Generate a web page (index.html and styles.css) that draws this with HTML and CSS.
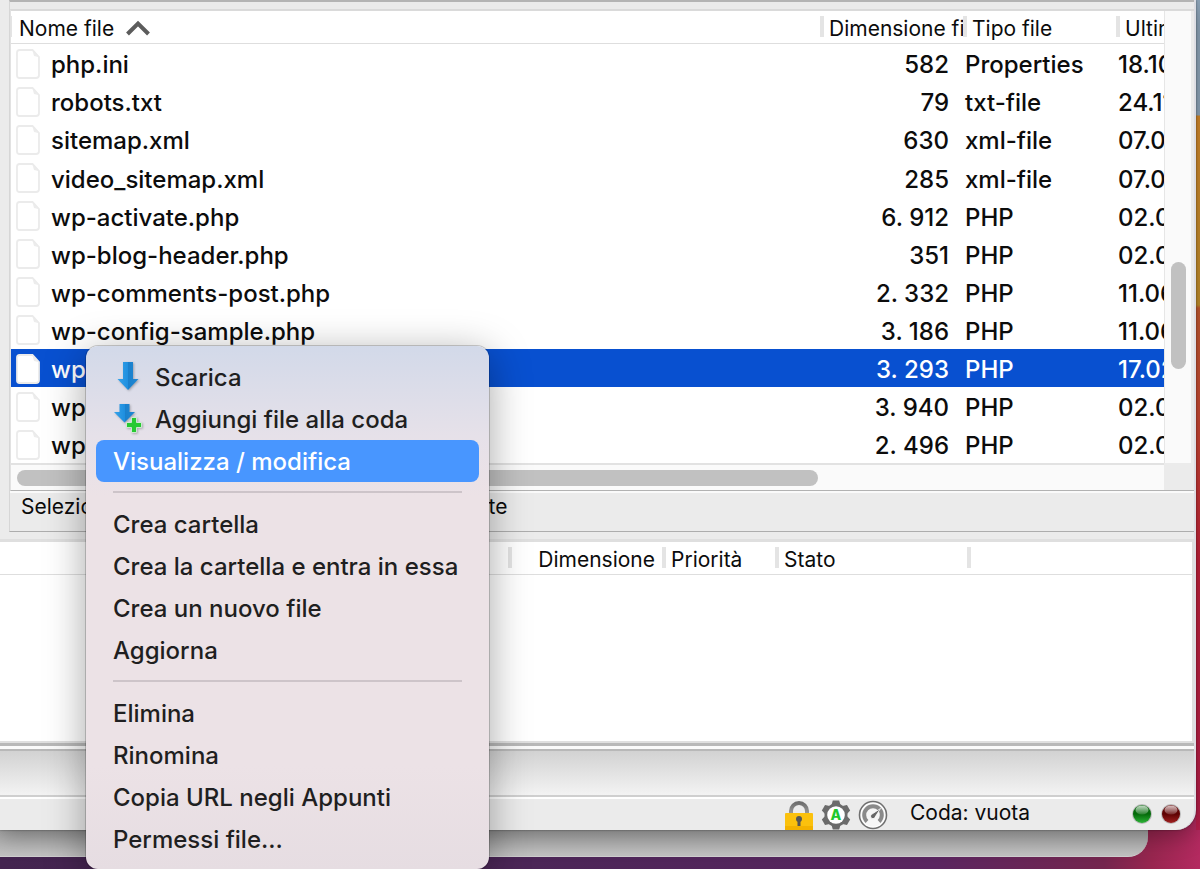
FILE: index.html
```html
<!DOCTYPE html>
<html lang="it">
<head>
<meta charset="utf-8">
<meta name="viewport" content="width=device-width, initial-scale=1">
<title>Gestione file</title>
<link rel="stylesheet" href="styles.css">
</head>
<body>
<svg class="defs" aria-hidden="true">
  <defs>
    <linearGradient id="blue" x1="0" x2="1" y1="0" y2="0">
      <stop offset="0" stop-color="#36a3ea"/><stop offset=".5" stop-color="#1f8fdf"/><stop offset=".51" stop-color="#1a80cc"/><stop offset="1" stop-color="#2088d4"/>
    </linearGradient>
    <linearGradient id="metal" x1="0" x2="0" y1="0" y2="1">
      <stop offset="0" stop-color="#6e6e6e"/><stop offset="1" stop-color="#9c9c9c"/>
    </linearGradient>
    <linearGradient id="led-green" x1="0" x2="0" y1="0" y2="1">
      <stop offset="0" stop-color="#0b6b10"/><stop offset=".5" stop-color="#046a0a"/><stop offset="1" stop-color="#2cb336"/>
    </linearGradient>
    <linearGradient id="led-red" x1="0" x2="0" y1="0" y2="1">
      <stop offset="0" stop-color="#6a0b0b"/><stop offset=".5" stop-color="#5e0202"/><stop offset="1" stop-color="#a02020"/>
    </linearGradient>
    <linearGradient id="shine" x1="0" x2="0" y1="0" y2="1">
      <stop offset="0" stop-color="#fff" stop-opacity=".75"/><stop offset="1" stop-color="#fff" stop-opacity=".15"/>
    </linearGradient>
    <symbol id="file" viewBox="0 0 24 30">
      <path d="M3.500 1H16.500L23 8V26Q23 29 20 29H3.500Q1 29 1 26.500V3.500Q1 1 3.500 1Z" fill="#fff" stroke="#ebebeb" stroke-width="1.800"/>
      <path d="M16.500 1.500 18 7 22.500 8Z" fill="#ececec"/>
    </symbol>
  </defs>
</svg>
<main class="window">
  <div class="remote">
    <section class="panel">
      <div class="list">
        <table class="files">
          <colgroup><col><col class="c-size"><col class="c-type"><col class="c-date"></colgroup>
          <thead>
            <tr>
              <th>Nome file <svg class="sort" viewBox="0 0 24 16"><path d="M1.500 14 12 3.500 22.500 14" fill="none" stroke="#5c5c5c" stroke-width="4"/></svg></th>
              <th>Dimensione file</th><th>Tipo file</th><th>Ultima modifica</th>
            </tr>
          </thead>
          <tbody>
            <tr><td><svg class="file"><use href="#file"/></svg>php.ini</td><td>582</td><td>Properties</td><td>18.10.2020</td></tr>
            <tr><td><svg class="file"><use href="#file"/></svg>robots.txt</td><td>79</td><td>txt-file</td><td>24.11.2020</td></tr>
            <tr><td><svg class="file"><use href="#file"/></svg>sitemap.xml</td><td>630</td><td>xml-file</td><td>07.07.2020</td></tr>
            <tr><td><svg class="file"><use href="#file"/></svg>video_sitemap.xml</td><td>285</td><td>xml-file</td><td>07.07.2020</td></tr>
            <tr><td><svg class="file"><use href="#file"/></svg>wp-activate.php</td><td>6. 912</td><td>PHP</td><td>02.09.2020</td></tr>
            <tr><td><svg class="file"><use href="#file"/></svg>wp-blog-header.php</td><td>351</td><td>PHP</td><td>02.09.2020</td></tr>
            <tr><td><svg class="file"><use href="#file"/></svg>wp-comments-post.php</td><td>2. 332</td><td>PHP</td><td>11.06.2020</td></tr>
            <tr><td><svg class="file"><use href="#file"/></svg>wp-config-sample.php</td><td>3. 186</td><td>PHP</td><td>11.06.2020</td></tr>
            <tr class="selected"><td><svg class="file"><use href="#file"/></svg>wp-config.php</td><td>3. 293</td><td>PHP</td><td>17.02.2020</td></tr>
            <tr><td><svg class="file"><use href="#file"/></svg>wp-cron.php</td><td>3. 940</td><td>PHP</td><td>02.09.2020</td></tr>
            <tr><td><svg class="file"><use href="#file"/></svg>wp-links-opml.php</td><td>2. 496</td><td>PHP</td><td>02.09.2020</td></tr>
          </tbody>
        </table>
      </div>
      <div class="track-v"><div class="thumb-v"></div></div>
      <div class="track-h"><div class="thumb-h"></div></div>
    </section>
    <div class="selection">Selezionato 1 file.&nbsp; Dimensione totale: 3. 293 byte</div>
  </div>
  <section class="queue">
    <table class="queue-table">
      <colgroup><col><col class="q-size"><col class="q-prio"><col class="q-state"><col class="q-rest"></colgroup>
      <thead><tr><th></th><th class="right">Dimensione</th><th>Priorità</th><th>Stato</th><th></th></tr></thead>
    </table>
  </section>
  <div class="splitter"></div>
  <div class="tabs"></div>
  <footer class="statusbar">
    <svg class="icon" viewBox="0 0 30 30">
      <path d="M7 14V11a8 8 0 0 1 16 0v3" fill="none" stroke="url(#metal)" stroke-width="4"/>
      <rect x="1" y="13" width="28" height="17" rx="1" fill="#fbc10d"/>
      <rect x="1" y="26" width="28" height="4" fill="#f3b200"/>
      <circle cx="15" cy="19" r="3" fill="#555"/><rect x="13.500" y="19" width="3" height="7" fill="#555"/>
    </svg>
    <svg class="icon" viewBox="0 0 30 30">
      <g fill="#6b6b6b">
        <circle cx="15" cy="15" r="11.500"/>
        <path id="tooth" d="M10.500 5 11.800 .500H18.200L19.500 5V25L18.200 29.500H11.800L10.500 25Z"/>
        <use href="#tooth" transform="rotate(60 15 15)"/>
        <use href="#tooth" transform="rotate(120 15 15)"/>
      </g>
      <circle cx="15" cy="15" r="8.800" fill="#fff"/>
      <text class="gear-letter" x="15" y="20" text-anchor="middle">A</text>
    </svg>
    <svg class="icon" viewBox="0 0 30 30">
      <circle cx="15" cy="15" r="13.500" fill="#fff" stroke="#707070" stroke-width="1.600"/>
      <circle cx="15" cy="15" r="11.500" fill="#f6f6f6"/>
      <path d="M9 21.500A8.800 8.800 0 1 1 21 21.500" fill="none" stroke="#8a8a8a" stroke-width="4"/>
      <path d="M22.500 8.500 16.800 17.500A2.300 2.300 0 1 1 13.700 14.300Z" fill="#666" stroke="#fff" stroke-width=".8"/>
    </svg>
    <span class="queue-state">Coda: vuota</span>
    <svg class="led" viewBox="0 0 22 22"><circle cx="11" cy="11" r="10" fill="#bbb"/><circle cx="11" cy="11" r="9" fill="url(#led-green)"/><ellipse cx="11" cy="7" rx="6.500" ry="4.500" fill="url(#shine)"/></svg>
    <svg class="led" viewBox="0 0 22 22"><circle cx="11" cy="11" r="10" fill="#bbb"/><circle cx="11" cy="11" r="9" fill="url(#led-red)"/><ellipse cx="11" cy="7" rx="6.500" ry="4.500" fill="url(#shine)"/></svg>
  </footer>
</main>
<div class="back-window"></div>

<div class="menu" role="menu">
  <button role="menuitem"><svg class="menu-icon" viewBox="0 0 30 30"><path d="M10 1H20V18H25.500L15 29 4.500 18H10Z" fill="url(#blue)"/></svg>Scarica</button>
  <button role="menuitem"><svg class="menu-icon" viewBox="0 0 30 30"><path d="M6.500 1H16.500V9H22L11.500 19.500 1 9H6.500Z" fill="url(#blue)"/><path d="M18.500 14.500H23.500V19.500H28.500V24.500H23.500V29.500H18.500V24.500H13.500V19.500H18.500Z" fill="#27c932" stroke="#e3f3e6" stroke-width=".8"/></svg>Aggiungi file alla coda</button>
  <button role="menuitem" class="active">Visualizza / modifica</button>
  <hr>
  <button role="menuitem">Crea cartella</button>
  <button role="menuitem">Crea la cartella e entra in essa</button>
  <button role="menuitem">Crea un nuovo file</button>
  <button role="menuitem">Aggiorna</button>
  <hr>
  <button role="menuitem">Elimina</button>
  <button role="menuitem">Rinomina</button>
  <button role="menuitem">Copia URL negli Appunti</button>
  <button role="menuitem">Permessi file...</button>
</div>
</body>
</html>
```
FILE: styles.css
```css
* { box-sizing: border-box; }

body {
  margin: 0;
  min-height: 100vh;
  overflow: hidden;
  position: relative;
  font-family: Inter, "Liberation Sans", sans-serif;
  font-size: 24px;
  font-weight: 500;
  color: #0c0c0c;
  background:
    linear-gradient(#8fa6bb 0 115px, #d68a2c 116px, #c4902c 305px, #c65a30 308px, #cc4434 440px, #c4203a 560px, #b81e4c 830px) right top / 4px 830px no-repeat,
    linear-gradient(90deg, #43244f, #4a2656 40%, #5a2660 78%, #74264e 92%, #98264f 96%, #b42a60);
}

.defs { position: absolute; width: 0; height: 0; }

.window {
  margin-right: 4px;
  display: flex;
  flex-direction: column;
  background: #ebebeb;
  border-right: 2px solid #dedee4;
  border-radius: 0 0 20px 0;
  position: relative;
  box-shadow: 0 0 2px #0008, 0 6px 24px #0005;
}

.remote {
  margin-left: 9px;
  border-top: 2px solid #b4b4b4;
  border-bottom: 1px solid #adadad;
  border-left: 1px solid #d6d6d6;
  padding-top: 7px;
}

.panel {
  display: grid;
  grid-template-columns: minmax(0, 1fr) 30px;
  border-top: 2px solid #dadada;
  border-left: 1px solid #e2e2e2;
  border-bottom: 1px solid #b2b2b2;
  background: #ebebeb;
}

.list { overflow: hidden; background: #fff; }

.files {
  width: 100%;
  height: 452px;
  table-layout: fixed;
  border-collapse: collapse;
}

.c-size { width: 143px; }
.c-type { width: 153px; }
.c-date { width: 48px; }

th {
  height: 32px;
  padding: 5px 0 0 9px;
  font-size: 21px;
  line-height: 24px;
  font-weight: 400;
  text-align: left;
  white-space: nowrap;
  overflow: hidden;
  border-bottom: 1px solid #dedede;
  background: linear-gradient(#e4e4e4, #e4e4e4) left center / 4px 21px no-repeat;
}

.files th:first-child { padding-left: 8px; background-size: 1px 21px; }
.sort { width: 24px; height: 16px; margin-left: 6px; }

td {
  padding: 5px 0 0 2px;
  line-height: 28px;
  white-space: nowrap;
  overflow: hidden;
}

td:first-child { padding-left: 5px; }
td:nth-child(2) { text-align: right; padding-right: 14px; }

.file {
  width: 24px;
  height: 30px;
  margin-right: 11px;
  vertical-align: middle;
  margin-top: -6px;
}

.selected { background: #0850d0; color: #fff; }

.track-v { margin-right: 3px; background: #fafafa; border-left: 1px solid #e6e6e6; padding: 251px 5px 0 6px; }
.thumb-v { height: 107px; border-radius: 8px; background: #c1c1c1; }
.track-h { height: 27px; background: #fafafa; border-top: 2px solid #e2e2e2; padding: 5px 0 0 6px; }
.thumb-h { width: 801px; max-width: 90%; height: 16px; border-radius: 8px; background: #c1c1c1; }

.selection {
  height: 40px;
  padding: 2px 0 0 11px;
  border-top: 2px solid #fafafa;
  font-size: 21px;
  font-weight: 400;
  line-height: 24px;
}

.queue {
  margin-top: 7px;
  min-height: 204px;
  background: #fff;
  border: solid #dfdfdf;
  border-width: 3px 2px 2px 0;
}

.queue-table { width: 100%; table-layout: fixed; border-collapse: collapse; }
.q-size { width: 154px; }
.q-prio { width: 113px; }
.q-state { width: 192px; }
.q-rest { width: 225px; }
.queue th:first-child { background: none; }
.queue .right { text-align: right; padding-right: 7px; }

.splitter { height: 8px; border: solid #b8b8b8; border-width: 3px 0 2px; background: #fafafa; }
.tabs { height: 46px; background: linear-gradient(#d2d2d2, #f3f3f3); border-bottom: 2px solid #cfcfcf; }

.statusbar {
  display: flex;
  align-items: center;
  gap: 7px;
  height: 33px;
  padding: 0 12px 0 0;
  justify-content: flex-end;
  border-top: 2px solid #fff;
  border-radius: 0 0 18px 0;
}

.icon { width: 30px; height: 30px; }
.gear-letter { font: 800 14px Inter, sans-serif; fill: #1fc82c; }
.queue-state { flex: 0 0 214px; margin-left: 15px; padding-bottom: 3px; font-size: 21px; font-weight: 400; line-height: 24px; }
.led { width: 22px; height: 22px; margin-bottom: 2px; }

.back-window {
  height: 27px;
  margin-right: 52px;
  border-radius: 0 0 20px 0;
  background: linear-gradient(#a9a9a9, #c2c2c2);
  border-bottom: 1px solid #d0d0d0;
}

.menu {
  position: absolute;
  left: 86px;
  top: 346px;
  width: 403px;
  padding: 10px 10px 9px;
  border-radius: 12px;
  background: linear-gradient(#d2d9e9, #e6e1e9 90px, #ece2e6 150px, #ece2e6 420px, #e6dde2);
  box-shadow: 0 0 0 1px #0000002e, 0 8px 40px #0000005c;
}

.menu button {
  display: flex;
  align-items: center;
  width: 100%;
  height: 42px;
  padding: 1px 17px 0;
  border: 0;
  border-radius: 8px;
  background: none;
  font: inherit;
  line-height: 30px;
  color: #1f1f21;
  text-align: left;
  white-space: nowrap;
}

.menu .active { background: #4896ff; color: #fff; }
.menu-icon { width: 30px; height: 30px; margin: 0 12px 3px 0; filter: drop-shadow(1px 1px 1px #0004); }
.menu hr { height: 2px; margin: 9px 17px 10px; border: 0; background: #cdc4c9; }
```
